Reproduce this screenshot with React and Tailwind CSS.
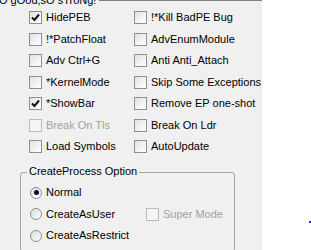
import { useState } from 'react'

const font = { fontFamily: '"Liberation Sans", Tahoma, Arial, sans-serif' }

function Check({ label, checked, disabled }) {
    return (
        <div className="flex items-center h-[21.5px]">
            <span
                className={`w-[13px] h-[13px] border flex items-center justify-center shrink-0 ${disabled
                    ? 'border-[#bcbcbc] bg-[#f4f4f4]'
                    : 'border-[#8e8f8f] bg-gradient-to-br from-[#e2e2e2] to-white'
                    }`}
            >
                {checked && (
                    <svg width="9" height="9" viewBox="0 0 9 9">
                        <path d="M1 4.5 L3.5 7 L8 1.5" fill="none" stroke="#111" strokeWidth="2" />
                    </svg>
                )}
            </span>
            <span className={`ml-[4px] text-[11px] leading-none whitespace-nowrap ${disabled ? 'text-[#a0a0a0]' : 'text-black'}`}>
                {label}
            </span>
        </div>
    )
}

function Radio({ label, checked }) {
    return (
        <div className="flex items-center h-[21.5px]">
            <span className="w-[12px] h-[12px] rounded-full border border-[#8e8f8f] bg-gradient-to-br from-[#dcdcdc] to-white flex items-center justify-center shrink-0">
                {checked && <span className="w-[5px] h-[5px] rounded-full bg-[#111]" />}
            </span>
            <span className="ml-[4px] text-[11px] leading-none whitespace-nowrap text-black">{label}</span>
        </div>
    )
}

export default function App() {
    const [left] = useState([
        { label: 'HidePEB', checked: true },
        { label: '!*PatchFloat' },
        { label: 'Adv Ctrl+G' },
        { label: '*KernelMode' },
        { label: '*ShowBar', checked: true },
        { label: 'Break On Tls', disabled: true },
        { label: 'Load Symbols' },
    ])
    const [right] = useState([
        { label: '!*Kill BadPE Bug' },
        { label: 'AdvEnumModule' },
        { label: 'Anti Anti_Attach' },
        { label: 'Skip Some Exceptions' },
        { label: 'Remove EP one-shot' },
        { label: 'Break On Ldr' },
        { label: 'AutoUpdate' },
    ])

    return (
        <div className="w-[311px] h-[250px] flex bg-white overflow-hidden" style={font}>
            <div className="w-[262px] h-full bg-[#f0f0f0] border-t border-[#808080] relative">
                {/* groupbox title cut at top */}
                <div className="absolute left-[-1px] top-[-6px] bg-[#f0f0f0] pr-[3px] text-[11px] leading-none text-black whitespace-nowrap">
                    O gOod,sO sTroNg!
                </div>

                <div className="flex pt-[6px] pl-[29px]">
                    <div className="w-[105px] flex flex-col">
                        {left.map(item => (
                            <Check key={item.label} {...item} />
                        ))}
                    </div>
                    <div className="flex flex-col">
                        {right.map(item => (
                            <Check key={item.label} {...item} />
                        ))}
                    </div>
                </div>

                {/* CreateProcess Option */}
                <div className="ml-[20px] mt-[14.5px] w-[215px] h-[80px] border border-[#a5a5a5] rounded-[3px] relative">
                    <div className="absolute left-[6px] top-[-7px] bg-[#f0f0f0] px-[2px] text-[11px] leading-none text-black whitespace-nowrap">
                        CreateProcess Option
                    </div>
                    <div className="flex pt-[9px] pl-[9px]">
                        <div className="w-[116px] flex flex-col">
                            <Radio label="Normal" checked />
                            <Radio label="CreateAsUser" />
                            <Radio label="CreateAsRestrict" />
                        </div>
                        <div className="flex flex-col pt-[21.5px]">
                            <Check label="Super Mode" disabled />
                        </div>
                    </div>
                </div>
            </div>
            <div className="flex-1 relative">
                <span className="absolute right-[0px] top-[221px] w-[2px] h-[2px] bg-[#2b2bd0]" />
            </div>
        </div>
    )
}
